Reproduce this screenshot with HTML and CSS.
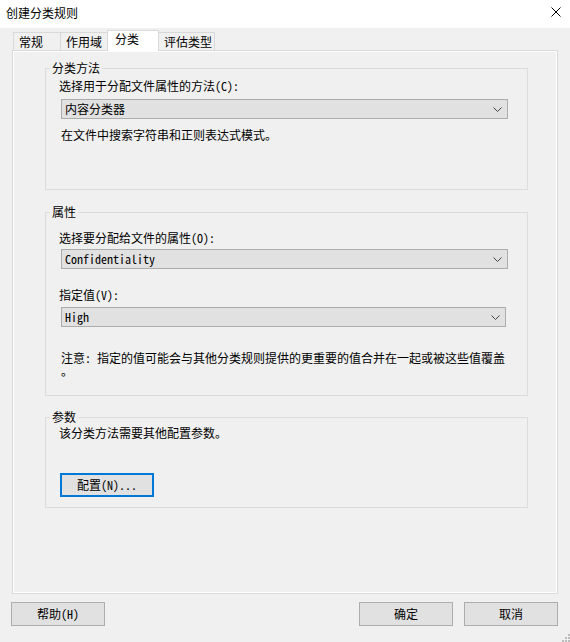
FILE: index.html
```html
<!DOCTYPE html>
<html lang="zh-CN">
<head>
    <meta charset="UTF-8">
    <title>创建分类规则</title>
    <link rel="stylesheet" href="styles.css">
</head>
<body>
    <div class="window">
        <div class="titlebar">
            <span class="title">创建分类规则</span>
            <svg class="close" width="10" height="10" viewBox="0 0 10 10">
                <path d="M0.5 0.5 L9.5 9.5 M9.5 0.5 L0.5 9.5" stroke="#000" stroke-width="1" fill="none"/>
            </svg>
        </div>

        <div class="tabs">
            <div class="tab">常规</div>
            <div class="tab">作用域</div>
            <div class="tab active">分类</div>
            <div class="tab">评估类型</div>
        </div>

        <div class="panel">
            <fieldset class="group g-method">
                <legend>分类方法</legend>
                <div class="group-body">
                    <div class="label first">选择用于分配文件属性的方法(C):</div>
                    <div class="select">
                        <span>内容分类器</span>
                        <svg class="chevron" width="9" height="5" viewBox="0 0 9 5"><path d="M0.5 0.5 L4.5 4.5 L8.5 0.5" stroke="#444" fill="none"/></svg>
                    </div>
                    <p class="desc">在文件中搜索字符串和正则表达式模式。</p>
                </div>
            </fieldset>

            <fieldset class="group g-prop">
                <legend>属性</legend>
                <div class="group-body">
                    <div class="label first">选择要分配给文件的属性(O):</div>
                    <div class="select">
                        <span>Confidentiality</span>
                        <svg class="chevron" width="9" height="5" viewBox="0 0 9 5"><path d="M0.5 0.5 L4.5 4.5 L8.5 0.5" stroke="#444" fill="none"/></svg>
                    </div>
                    <div class="label second">指定值(V):</div>
                    <div class="select short">
                        <span>High</span>
                        <svg class="chevron" width="9" height="5" viewBox="0 0 9 5"><path d="M0.5 0.5 L4.5 4.5 L8.5 0.5" stroke="#444" fill="none"/></svg>
                    </div>
                    <p class="note">注意: 指定的值可能会与其他分类规则提供的更重要的值合并在一起或被这些值覆盖。</p>
                </div>
            </fieldset>

            <fieldset class="group g-params">
                <legend>参数</legend>
                <div class="group-body">
                    <div class="label">该分类方法需要其他配置参数。</div>
                    <button class="btn focus">配置(N)...</button>
                </div>
            </fieldset>
        </div>

        <div class="footer">
            <button class="btn">帮助(H)</button>
            <div class="spacer"></div>
            <button class="btn">确定</button>
            <button class="btn">取消</button>
        </div>

        <svg class="grip" width="9" height="9" viewBox="0 0 9 9">
            <rect x="7" y="1" width="2" height="2" fill="#bdbdbd"/>
            <rect x="4" y="4" width="2" height="2" fill="#bdbdbd"/>
            <rect x="7" y="4" width="2" height="2" fill="#bdbdbd"/>
            <rect x="1" y="7" width="2" height="2" fill="#bdbdbd"/>
            <rect x="4" y="7" width="2" height="2" fill="#bdbdbd"/>
            <rect x="7" y="7" width="2" height="2" fill="#bdbdbd"/>
        </svg>
    </div>
</body>
</html>
```

FILE: styles.css
```css
body {
    margin: 0;
    background: #f0f0f0;
    font-family: "Noto Sans CJK SC", "Microsoft YaHei", sans-serif;
    font-size: 12px;
    color: #000;
}

.window {
    position: relative;
    width: 570px;
    height: 642px;
    overflow: hidden;
}

/* title bar */
.titlebar {
    height: 28px;
    background: #fff;
    display: flex;
    align-items: flex-start;
    justify-content: space-between;
    padding: 5px 9px 0 6px;
    box-sizing: border-box;
}
.title {
    line-height: 16px;
}
.close {
    margin-top: 2px;
}

/* tabs */
.tabs {
    height: 22px;
    display: flex;
    align-items: flex-end;
    padding-left: 13px;
}
.tab {
    position: relative;
    box-sizing: border-box;
    height: 18px;
    min-width: 48px;
    padding: 0 2px 0 5px;
    margin-left: -1px;
    border: 1px solid #d9d9d9;
    border-bottom: none;
    background: #f0f0f0;
    line-height: 17px;
}
.tab:first-child {
    margin-left: 0;
}
.tab.active {
    z-index: 2;
    height: 21px;
    min-width: 52px;
    padding: 0 2px 0 7px;
    margin-bottom: -1px;
    background: #fff;
    line-height: 16px;
}

/* tab page */
.panel {
    position: relative;
    z-index: 1;
    box-sizing: border-box;
    height: 544px;
    margin: 0 12px;
    padding: 9px 29px 0 32px;
    border: 1px solid #d9d9d9;
    box-shadow: inset 0 0 0 1px #fff;
    background: #f0f0f0;
}

.group {
    margin: 0;
    padding: 0;
    min-width: 0;
    border: 1px solid #dcdcdc;
}
.group legend {
    margin-left: 4px;
    padding: 0 2px;
    line-height: 16px;
}
.group-body {
    padding: 0 19px 0 13px;
}

.g-method .group-body {
    padding-bottom: 46px;
}
.g-prop {
    margin-top: 14px;
}
.g-prop .group-body {
    padding-bottom: 18px;
}
.g-params {
    margin-top: 13px;
}
.g-params .group-body {
    padding-bottom: 10px;
}

/* dialog body text uses the fixed-width CJK face */
.label, .desc, .note, .select, .btn {
    font-family: "Noto Sans Mono CJK SC", "Noto Sans CJK SC", monospace;
    font-size: 12px;
}

.label {
    line-height: 16px;
}
.g-method .label.first {
    margin-top: 2px;
}
.g-prop .label.first {
    margin-top: 10px;
}
.g-prop .label.second {
    margin-top: 18px;
}

.select {
    box-sizing: border-box;
    height: 20px;
    margin: 5px 0 0 2px;
    padding: 0 5px 0 3px;
    border: 1px solid #adadad;
    background: #e1e1e1;
    display: flex;
    align-items: center;
    justify-content: space-between;
    line-height: 18px;
}
.g-prop .select {
    margin-top: 3px;
}
.g-prop .select.short {
    margin-top: 4px;
    margin-right: 2px;
}
.chevron {
    margin-top: 1px;
}

.desc {
    margin: 8px 0 0 2px;
    line-height: 16px;
}
.note {
    margin: 24px 0 0 2px;
    line-height: 13px;
    line-break: anywhere;
}

/* buttons */
.btn {
    box-sizing: border-box;
    width: 94px;
    height: 24px;
    padding: 0;
    border: 1px solid #adadad;
    background: #e1e1e1;
    color: #000;
    line-height: 20px;
}
.btn.focus {
    display: block;
    margin: 32px 0 0 1px;
    border: 2px solid #0078d7;
}

.footer {
    display: flex;
    gap: 11px;
    margin-top: 8px;
    padding: 0 12px 0 11px;
}
.spacer {
    flex: 1;
}

.grip {
    position: absolute;
    right: 0;
    bottom: 0;
}
```
